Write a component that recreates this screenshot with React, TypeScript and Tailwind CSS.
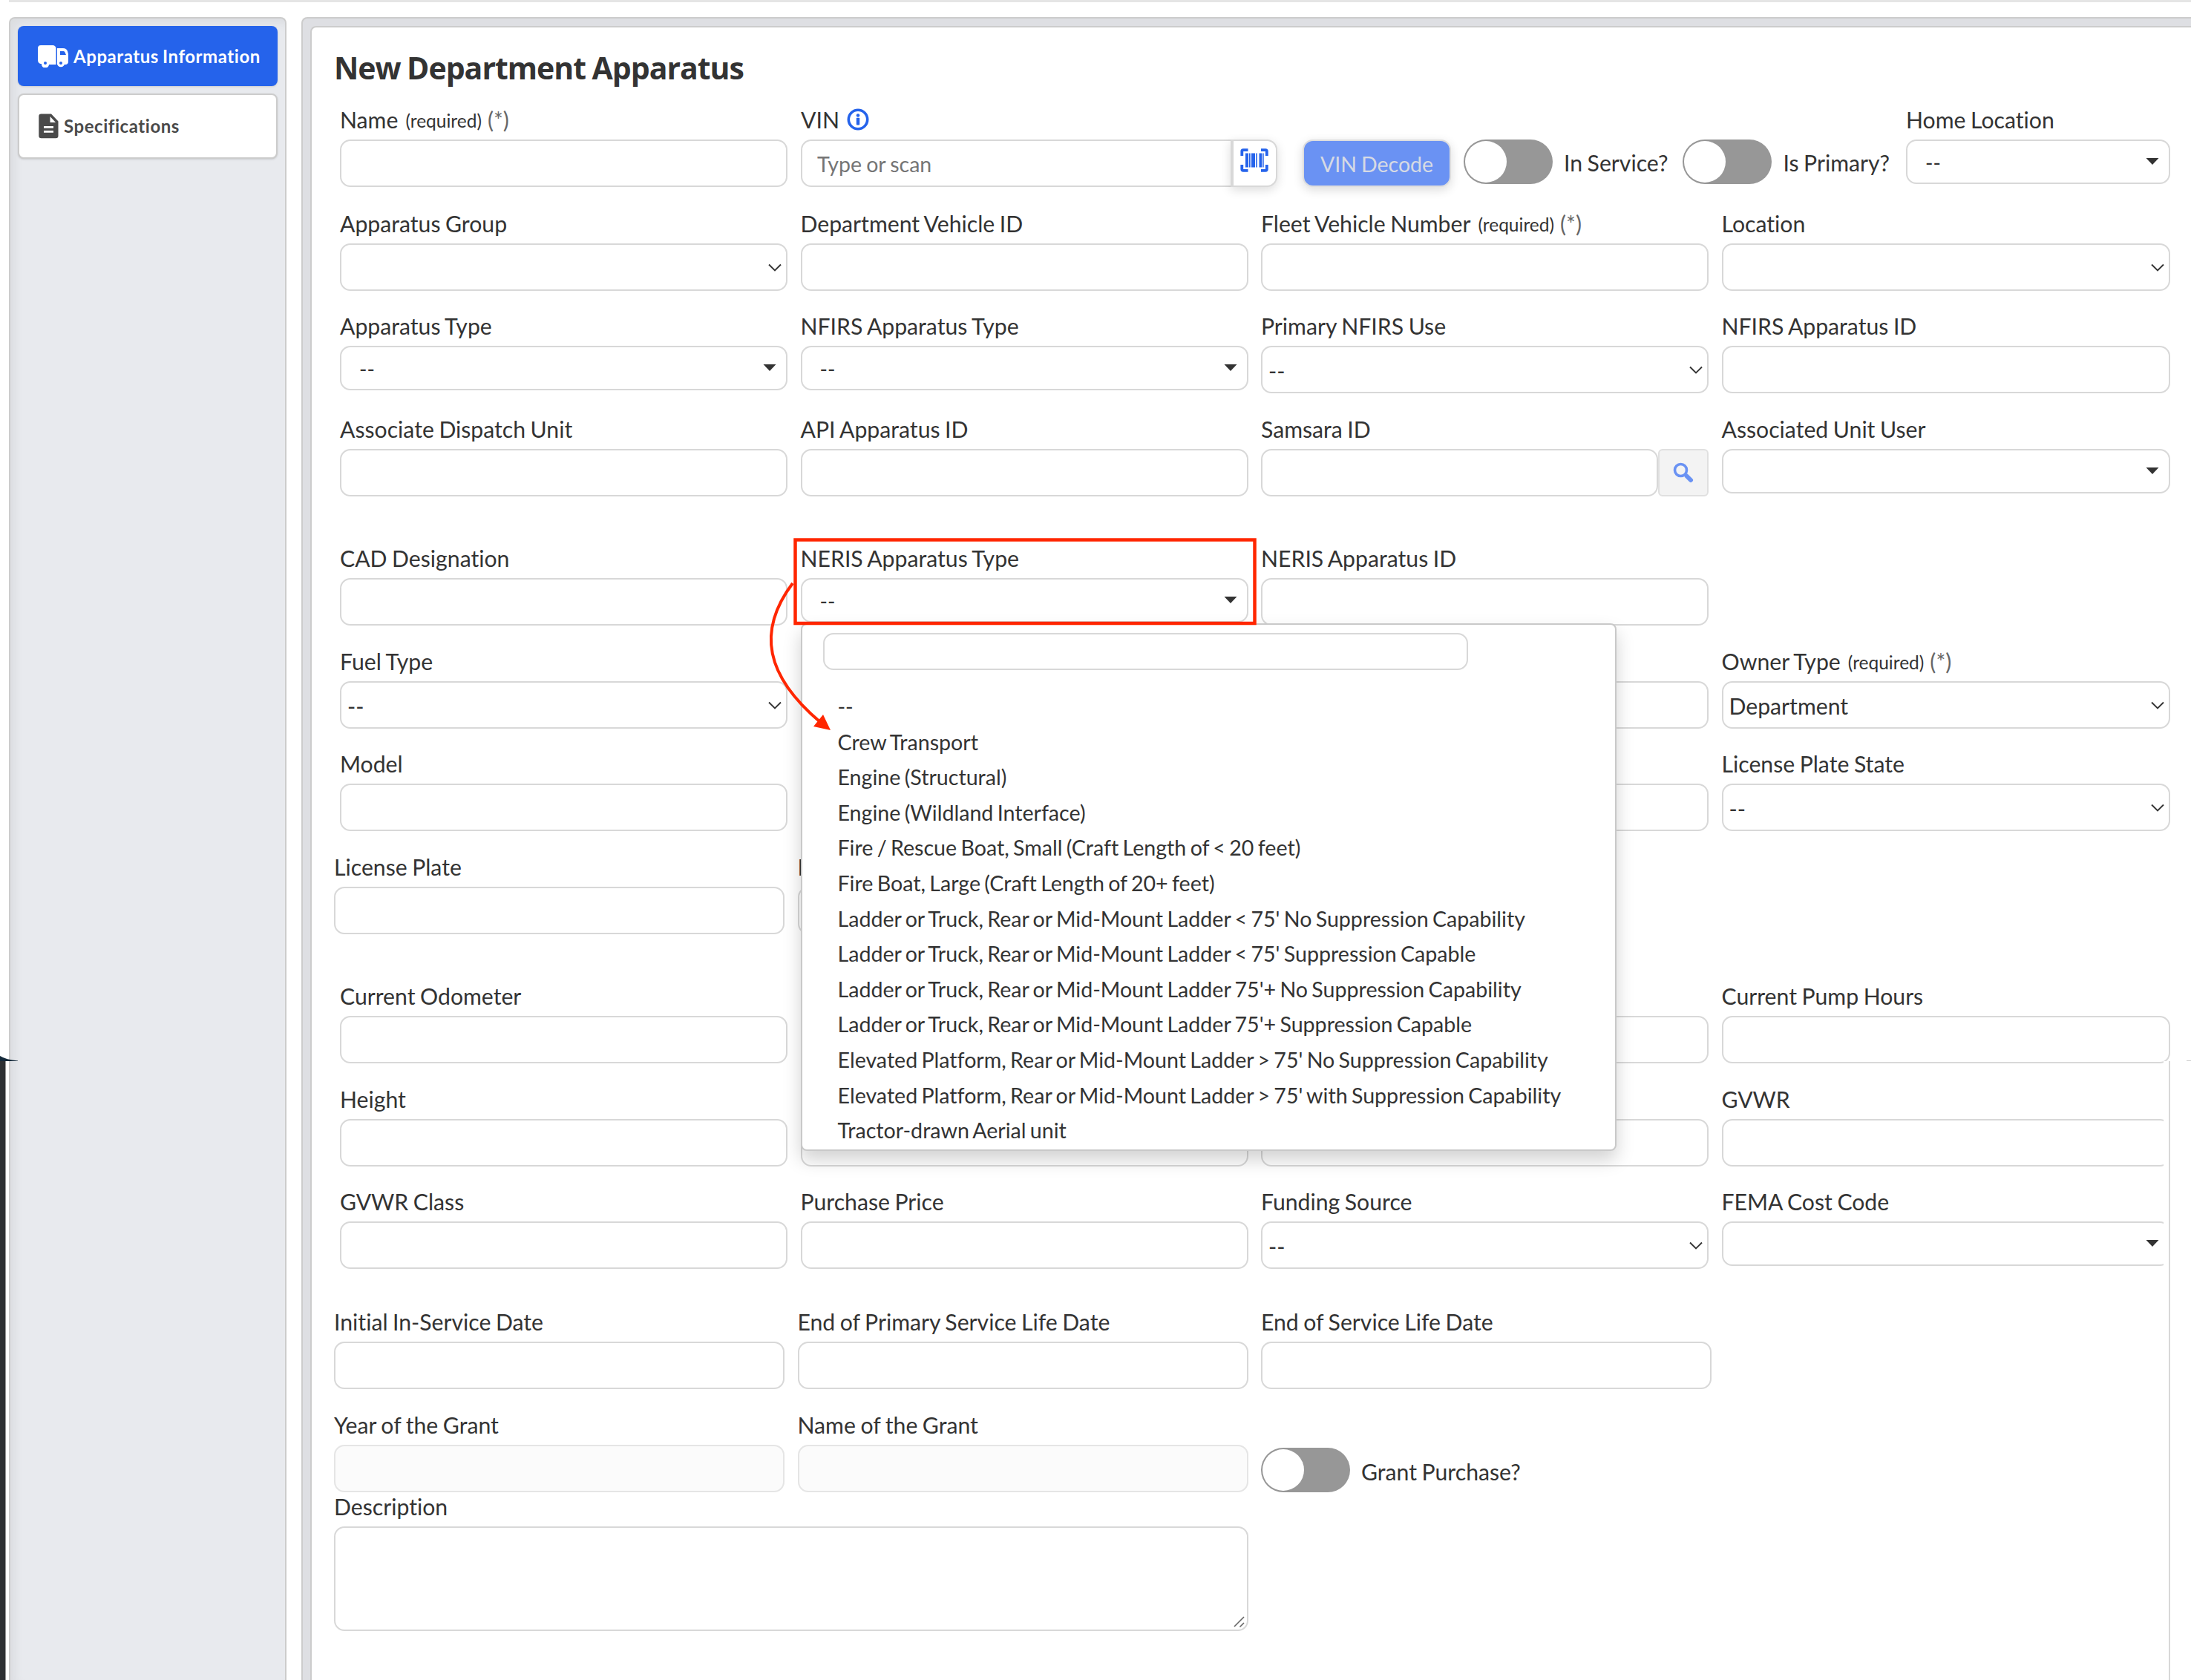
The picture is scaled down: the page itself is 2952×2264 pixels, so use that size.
import type { ReactNode } from "react";

const nerisTypes = [
  "--",
  "Crew Transport",
  "Engine (Structural)",
  "Engine (Wildland Interface)",
  "Fire / Rescue Boat, Small (Craft Length of < 20 feet)",
  "Fire Boat, Large (Craft Length of 20+ feet)",
  "Ladder or Truck, Rear or Mid-Mount Ladder < 75' No Suppression Capability",
  "Ladder or Truck, Rear or Mid-Mount Ladder < 75' Suppression Capable",
  "Ladder or Truck, Rear or Mid-Mount Ladder 75'+ No Suppression Capability",
  "Ladder or Truck, Rear or Mid-Mount Ladder 75'+ Suppression Capable",
  "Elevated Platform, Rear or Mid-Mount Ladder > 75' No Suppression Capability",
  "Elevated Platform, Rear or Mid-Mount Ladder > 75' with Suppression Capability",
  "Tractor-drawn Aerial unit",
];

function TruckIcon() {
  return (
    <svg width="42" height="30" viewBox="0 0 42 30" fill="currentColor">
      <path d="M4 0H20a4.500 4.500 0 0 1 4.500 4.500V26H15a5 5 0 1 1-10 -1C2 25 0 23 0 20V4a4 4 0 0 1 4-4Z" />
      <path
        fillRule="evenodd"
        d="M26 4H34c3 0 5 1.500 6 4l1 4v10c0 2.500-1.500 4-4 4H26ZM30 8v5h8l-1.500-3.500C36 8.500 35.500 8 34 8Z"
      />
      <circle cx="31" cy="24" r="5.200" />
      <circle cx="10" cy="24" r="5.200" />
      <g className="fill-[#2563eb]">
        <circle cx="10" cy="24" r="2" />
        <circle cx="31" cy="24" r="2" />
      </g>
    </svg>
  );
}

function DocumentIcon() {
  return (
    <svg width="27" height="34" viewBox="0 0 27 34">
      <path d="M3.500 0.500H17L26.500 10.500V30a3.200 3.200 0 0 1-3.200 3.200H3.500A3.200 3.200 0 0 1 .3 30V3.700A3.200 3.200 0 0 1 3.500.5Z" fill="#4a4a4a" />
      <path d="M15.500 4v8H23ZM7 17H20v2.700H7ZM7 23H20v2.700H7Z" fill="#fff" />
    </svg>
  );
}

function InfoIcon() {
  return (
    <svg width="30" height="30" viewBox="0 0 30 30" className="text-[#2563eb]">
      <circle cx="15" cy="15" r="12.700" fill="none" stroke="currentColor" strokeWidth="3.600" />
      <circle cx="15" cy="9.500" r="2.300" fill="currentColor" />
      <rect x="12.800" y="12.800" width="4.400" height="9.600" rx=".8" fill="currentColor" />
    </svg>
  );
}

function ScanIcon() {
  return (
    <svg width="38" height="32" viewBox="0 0 38 32" fill="none" stroke="#2563eb">
      <path d="M2.300 10V4a1.800 1.800 0 0 1 1.800-1.800H10.500M28 2.200h6a1.800 1.800 0 0 1 1.800 1.800v6M35.800 22v6a1.800 1.800 0 0 1-1.800 1.800H28M10.500 29.800H4.100A1.800 1.800 0 0 1 2.300 28V22" strokeWidth="3.800" />
      <path d="M7 6.500h4v19h-4ZM12 6.500h1.700v19H12ZM15 6.500h5v19h-5ZM21.200 6.500h1.600v19h-1.600ZM25.500 6.500h3.700v19h-3.700ZM30.200 6.500h1.500v19h-1.500Z" fill="#2563eb" stroke="none" />
    </svg>
  );
}

function SearchIcon() {
  return (
    <svg width="28" height="28" viewBox="0 0 28 28" fill="none" stroke="#6a92f3" strokeLinecap="round">
      <circle cx="10.500" cy="10.500" r="8" strokeWidth="3.600" />
      <path d="M18.500 18.500L24 24" strokeWidth="6" />
    </svg>
  );
}

function Caret() {
  return (
    <svg width="18" height="9" viewBox="0 0 18 9" className="-mt-0.5">
      <path d="M0.500 0H17.500L9 9Z" fill="#333" />
    </svg>
  );
}

function Chevron() {
  return (
    <svg width="20" height="12" viewBox="0 0 20 12" fill="none" className="mt-px">
      <path d="M2 1.500L10 9.500L18 1.500" stroke="#333" strokeWidth="1.900" />
    </svg>
  );
}

type FieldProps = {
  label: string;
  required?: boolean;
  kind?: "text" | "picker" | "select";
  value?: string;
  disabled?: boolean;
};

function Label({ children }: { children: ReactNode }) {
  return <div className="mb-2.5 flex h-9 items-center whitespace-nowrap pt-0.5 leading-9">{children}</div>;
}

function Control({ kind = "text", value = "", disabled = false }: Omit<FieldProps, "label" | "required">) {
  if (kind === "picker") {
    return (
      <div className="flex h-15 items-center justify-between rounded-[14px] border-2 border-[#d8d8d8] bg-white pl-6 pr-[13px] text-[28px]">
        <span className="pt-0.5">{value}</span>
        <Caret />
      </div>
    );
  }
  if (kind === "select") {
    return (
      <div className="flex h-16 items-center justify-between rounded-[14px] border-2 border-[#d8d8d8] bg-white pl-2 pr-[5px]">
        <span className="pt-px">{value}</span>
        <Chevron />
      </div>
    );
  }
  return (
    <div
      className={
        disabled
          ? "h-16 rounded-[14px] border-2 border-[#e5e5e5] bg-[#fbfbfb]"
          : "h-16 rounded-[14px] border-2 border-[#d8d8d8] bg-white"
      }
    />
  );
}

function Field({ label, required, ...control }: FieldProps) {
  return (
    <div>
      <Label>
        {label}
        {required && (
          <>
            <span className="ml-2.5 pt-1 text-[24.500px]">(required)</span>
            <span className="ml-2 text-[#666]">(*)</span>
          </>
        )}
      </Label>
      <Control {...control} />
    </div>
  );
}

function Toggle({ label, labelClass = "pt-px" }: { label: string; labelClass?: string }) {
  return (
    <div className="flex items-center whitespace-nowrap">
      <div className="h-15 w-30 rounded-full bg-[#979797] p-0.5">
        <div className="size-14 rounded-full bg-white" />
      </div>
      <span className={`ml-[15px] ${labelClass}`}>{label}</span>
    </div>
  );
}

function Row({ className, children }: { className: string; children: ReactNode }) {
  return <div className={`grid grid-cols-[603px_603px_603px_604px] gap-x-[17.5px] ${className}`}>{children}</div>;
}

function WideRow({ className, children }: { className: string; children: ReactNode }) {
  return <div className={`-ml-2 grid grid-cols-[607px_607px_607px] gap-x-[17.5px] ${className}`}>{children}</div>;
}

function NerisMenu() {
  return (
    <div className="absolute left-0 top-[107px] z-10 h-[711px] w-[1099px] rounded-lg border-2 border-[#c9c9c9] bg-white shadow-[0_12px_24px_rgba(0,0,0,0.18)]">
      <div className="ml-7 mt-[11px] h-[50px] w-[869px] rounded-[14px] border-2 border-[#d8d8d8]" />
      <ul className="ml-12 mt-[26px] whitespace-nowrap text-[28.600px] leading-[47.600px] [word-spacing:-2px]">
        {nerisTypes.map((type) => (
          <li key={type}>{type}</li>
        ))}
      </ul>
    </div>
  );
}

function Callout() {
  return (
    <svg
      width="670"
      height="290"
      viewBox="0 0 670 290"
      fill="none"
      className="pointer-events-none absolute -left-[50px] -top-[16px] z-20"
    >
      <rect x="42.500" y="10.500" width="619" height="112.500" stroke="#ff2600" strokeWidth="4.500" />
      <path d="M39 69C-10 134 3 194 76 256" stroke="#ff2600" strokeWidth="4" />
      <path d="M90 267L67 262L80 246Z" fill="#ff2600" />
    </svg>
  );
}

function Sidebar() {
  return (
    <aside className="ml-3 w-[374px] shrink-0 rounded-t-lg border-2 border-b-0 border-[#ccc] bg-[#e8eaee] p-2.5 text-[24px] font-bold tracking-[0.55px] shadow-[inset_8px_8px_14px_-2px_rgba(0,0,0,0.06)]">
      <div className="flex h-[81px] items-center whitespace-nowrap rounded-lg bg-[#2563eb] pl-[27px] text-white shadow-sm">
        <TruckIcon />
        <span className="ml-[6px]">Apparatus Information</span>
      </div>
      <div className="mt-2.5 flex h-[88px] items-center rounded-lg border-2 border-[#ccc] bg-white pl-[26px] text-[#4a4a4a] shadow-sm">
        <DocumentIcon />
        <span className="ml-[7px]">Specifications</span>
      </div>
    </aside>
  );
}

export default function App() {
  return (
    <div className="relative h-[2264px] w-[2952px] overflow-hidden bg-white font-[Lato,sans-serif] text-[30.200px] leading-9 text-[#333] [font-variant-ligatures:none] [word-spacing:-1.200px]">
      <div className="ml-3 h-[3px] bg-[#e5e5e5]" />
      <div className="mt-5 flex h-[2241px]">
        <Sidebar />
        <main className="ml-5 w-[2600px] shrink-0 rounded-tl-lg border-2 border-b-0 border-[#ccc] bg-[#dedfe3] pl-2.5 pt-2.5">
          <div className="h-full rounded-tl-lg border-l-2 border-t-2 border-[#ccc] bg-white pl-[38px]">
            <h1 className="-ml-2 flex h-[105px] items-start pt-[28px] font-['Open_Sans','Noto_Sans',sans-serif] text-[41px] font-bold leading-[52px] tracking-[-1px]">
              New Department Apparatus
            </h1>

            <div className="flex h-[140px]">
              <div className="w-[603px]">
                <Field label="Name" required />
              </div>
              <div className="ml-[18px] w-[642px]">
                <Label>
                  VIN
                  <span className="ml-2.5">
                    <InfoIcon />
                  </span>
                </Label>
                <div className="flex h-16">
                  <div className="flex w-[579px] items-center rounded-l-[14px] border-2 border-r-0 border-[#d8d8d8] pl-5 pt-0.5 text-[28.500px] text-[#757575]">
                    Type or scan
                  </div>
                  <div className="flex w-[63px] items-start rounded-r-[14px] border-2 border-l-4 border-[#d8d8d8] bg-white pl-[9px] pt-2.5 shadow-[0_4px_14px_rgba(0,0,0,0.14)]">
                    <ScanIcon />
                  </div>
                </div>
              </div>
              <div className="ml-[34px] mt-[46px] flex h-16 w-[200px] items-center justify-center rounded-[14px] border-2 border-[#dedede] bg-[#6a92f3] pt-0.5 text-[28.500px] text-[#d6dae4] shadow-[0_4px_14px_rgba(0,0,0,0.14)]">
                VIN Decode
              </div>
              <div className="ml-[17px] mt-[46px] flex h-15 w-[596px] gap-[20px]">
                <Toggle label="In Service?" />
                <Toggle label="Is Primary?" />
              </div>
              <div className="w-[356px]">
                <Field label="Home Location" kind="picker" value="--" />
              </div>
            </div>

            <Row className="h-[138px]">
              <Field label="Apparatus Group" kind="select" />
              <Field label="Department Vehicle ID" />
              <Field label="Fleet Vehicle Number" required />
              <Field label="Location" kind="select" />
            </Row>
            <Row className="h-[139px]">
              <Field label="Apparatus Type" kind="picker" value="--" />
              <Field label="NFIRS Apparatus Type" kind="picker" value="--" />
              <Field label="Primary NFIRS Use" kind="select" value="--" />
              <Field label="NFIRS Apparatus ID" />
            </Row>
            <Row className="h-[174px]">
              <Field label="Associate Dispatch Unit" />
              <Field label="API Apparatus ID" />
              <div>
                <Label>Samsara ID</Label>
                <div className="flex">
                  <div className="h-16 w-[535px] rounded-[14px] border-2 border-[#d8d8d8]" />
                  <div className="flex h-16 w-[68px] items-center justify-center rounded-md border-2 border-[#e0e0e0] bg-[#f3f3f3]">
                    <SearchIcon />
                  </div>
                </div>
              </div>
              <Field label="Associated Unit User" kind="picker" />
            </Row>
            <Row className="h-[139px]">
              <Field label="CAD Designation" />
              <div className="relative">
                <Field label="NERIS Apparatus Type" kind="picker" value="--" />
                <NerisMenu />
                <Callout />
              </div>
              <Field label="NERIS Apparatus ID" />
            </Row>
            <Row className="h-[138px]">
              <Field label="Fuel Type" kind="select" value="--" />
              <Field label="" />
              <Field label="" />
              <Field label="Owner Type" required kind="select" value="Department" />
            </Row>
            <Row className="h-[139px]">
              <Field label="Model" />
              <Field label="" />
              <Field label="" />
              <Field label="License Plate State" kind="select" value="--" />
            </Row>
            <WideRow className="h-[174px]">
              <Field label="License Plate" />
              <Field label="D" />
            </WideRow>
            <Row className="h-[139px]">
              <Field label="Current Odometer" />
              <Field label="C" />
              <Field label="" />
              <Field label="Current Pump Hours" />
            </Row>
            <Row className="h-[138px]">
              <Field label="Height" />
              <Field label="" />
              <Field label="" />
              <Field label="GVWR" />
            </Row>
            <Row className="h-[162px]">
              <Field label="GVWR Class" />
              <Field label="Purchase Price" />
              <Field label="Funding Source" kind="select" value="--" />
              <Field label="FEMA Cost Code" kind="picker" />
            </Row>
            <WideRow className="h-[139px]">
              <Field label="Initial In-Service Date" />
              <Field label="End of Primary Service Life Date" />
              <Field label="End of Service Life Date" />
            </WideRow>
            <WideRow className="h-[110px]">
              <Field label="Year of the Grant" disabled />
              <Field label="Name of the Grant" disabled />
              <div className="pt-[50px]">
                <Toggle label="Grant Purchase?" labelClass="pt-1" />
              </div>
            </WideRow>
            <div className="-ml-2 w-[1232px]">
              <Label>Description</Label>
              <div className="flex h-[141px] items-end justify-end rounded-[14px] border-2 border-[#d8d8d8] p-0.5">
                <svg width="16" height="16" viewBox="0 0 16 16" stroke="#666" strokeWidth="1.600">
                  <path d="M1 14L14 1M8.500 14.500L14 9" />
                </svg>
              </div>
            </div>
          </div>
        </main>
      </div>

      {/* window edges showing through at the lower left and right */}
      <div className="absolute left-0 top-[1429px] h-[835px] w-3 border-l-[7px] border-[#2d3033] bg-white">
        <div className="h-full w-px bg-[#999]" />
      </div>
      <svg width="24" height="8" viewBox="0 0 24 8" className="absolute left-0 top-[1423px]">
        <path d="M0 0Q8 5 24 6.500V7H0Z" fill="#14293a" />
      </svg>
      <div className="absolute left-[2915px] top-[1430px] h-[834px] w-[37px] bg-white pl-[7px]">
        <div className="h-full w-0.5 bg-[#d8d8d8]" />
      </div>
      <div className="absolute left-[2946px] top-[1429px] h-px w-1.5 bg-[#ccc]" />
    </div>
  );
}
